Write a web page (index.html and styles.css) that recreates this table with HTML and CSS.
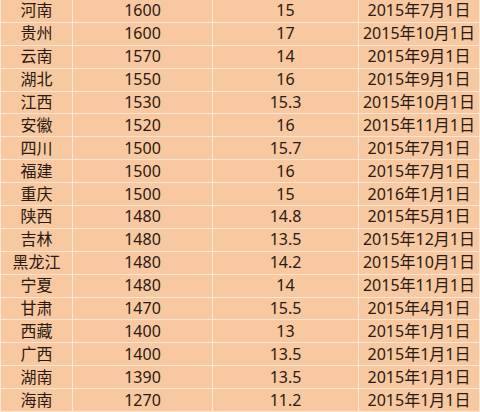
FILE: index.html
```html
<!DOCTYPE html>
<html lang="zh">
<head>
<meta charset="utf-8">
<link rel="stylesheet" href="styles.css">
</head>
<body>
<table class="wage-table">
<colgroup>
<col class="c-prov"><col class="c-wage"><col class="c-hour"><col class="c-date">
</colgroup>
<tbody>
<tr><td>河南</td><td>1600</td><td>15</td><td>2015年7月1日</td></tr>
<tr><td>贵州</td><td>1600</td><td>17</td><td>2015年10月1日</td></tr>
<tr><td>云南</td><td>1570</td><td>14</td><td>2015年9月1日</td></tr>
<tr><td>湖北</td><td>1550</td><td>16</td><td>2015年9月1日</td></tr>
<tr><td>江西</td><td>1530</td><td>15.3</td><td>2015年10月1日</td></tr>
<tr><td>安徽</td><td>1520</td><td>16</td><td>2015年11月1日</td></tr>
<tr><td>四川</td><td>1500</td><td>15.7</td><td>2015年7月1日</td></tr>
<tr><td>福建</td><td>1500</td><td>16</td><td>2015年7月1日</td></tr>
<tr><td>重庆</td><td>1500</td><td>15</td><td>2016年1月1日</td></tr>
<tr><td>陕西</td><td>1480</td><td>14.8</td><td>2015年5月1日</td></tr>
<tr><td>吉林</td><td>1480</td><td>13.5</td><td>2015年12月1日</td></tr>
<tr><td>黑龙江</td><td>1480</td><td>14.2</td><td>2015年10月1日</td></tr>
<tr><td>宁夏</td><td>1480</td><td>14</td><td>2015年11月1日</td></tr>
<tr><td>甘肃</td><td>1470</td><td>15.5</td><td>2015年4月1日</td></tr>
<tr><td>西藏</td><td>1400</td><td>13</td><td>2015年1月1日</td></tr>
<tr><td>广西</td><td>1400</td><td>13.5</td><td>2015年1月1日</td></tr>
<tr><td>湖南</td><td>1390</td><td>13.5</td><td>2015年1月1日</td></tr>
<tr><td>海南</td><td>1270</td><td>11.2</td><td>2015年1月1日</td></tr>
</tbody>
</table>
</body>
</html>
```
FILE: styles.css
```css
html, body {
  margin: 0;
  padding: 0;
  background: #f8c8a0;
  overflow: hidden;
}
.wage-table {
  border-collapse: collapse;
  table-layout: fixed;
  width: 479px;
  margin-top: -1px;
  font-family: "Noto Sans", "Noto Sans CJK SC", sans-serif;
  font-size: 16px;
  color: #2a1a12;
  background: #f8c8a0;
}
.c-prov { width: 72px; }
.c-wage { width: 140px; }
.c-hour { width: 146px; }
.c-date { width: 121px; }
.wage-table td {
  border: 1px solid #fde7d6;
  height: 21.9px;
  padding: 0;
  text-align: center;
  vertical-align: middle;
  line-height: 21px;
  white-space: nowrap;
}
```
